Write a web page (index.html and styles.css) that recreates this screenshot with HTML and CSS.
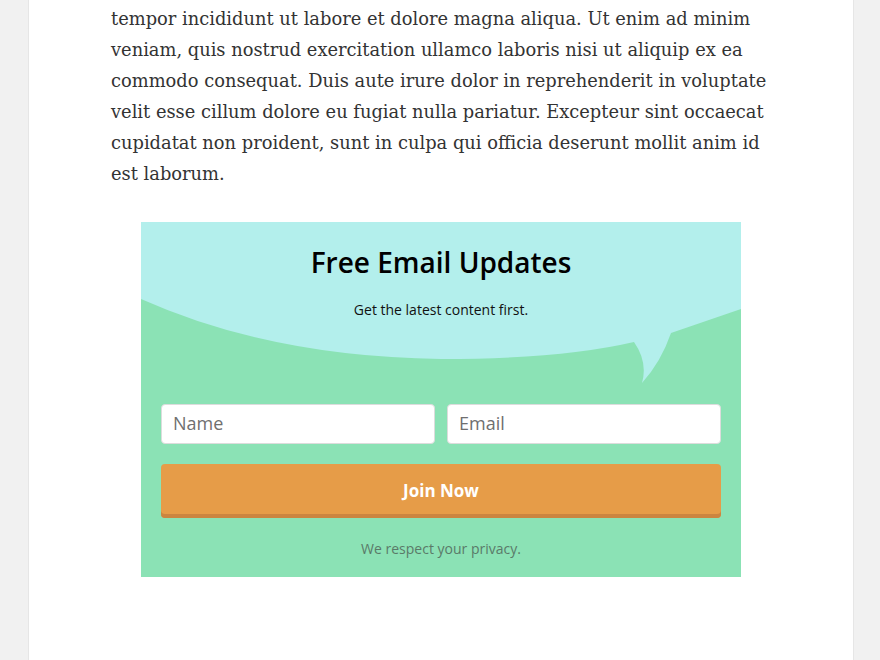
FILE: index.html
```html
<!DOCTYPE html>
<html>
<head>
<meta charset="utf-8">
<link rel="stylesheet" href="styles.css">
</head>
<body>
<div class="page">
  <article class="content">
    <p class="body-text">tempor incididunt ut labore et dolore magna aliqua. Ut enim ad minim veniam, quis nostrud exercitation ullamco laboris nisi ut aliquip ex ea commodo consequat. Duis aute irure dolor in reprehenderit in voluptate velit esse cillum dolore eu fugiat nulla pariatur. Excepteur sint occaecat cupidatat non proident, sunt in culpa qui officia deserunt mollit anim id est laborum.</p>

    <div class="optin">
      <svg class="bubble" width="600" height="170" viewBox="0 0 600 170" aria-hidden="true">
        <path d="M0,0 H600 V87 L530,111 Q520,140 501,161 Q507,140 493,120 Q420,137 300,137 Q130,135 0,77 Z" fill="#b3efec"/>
      </svg>
      <div class="optin-head">
        <h2 class="optin-title">Free Email Updates</h2>
        <p class="optin-sub">Get the latest content first.</p>
      </div>
      <form class="optin-form">
        <div class="fields">
          <input class="field" type="text" placeholder="Name">
          <input class="field" type="email" placeholder="Email">
        </div>
        <button class="join" type="button">Join Now</button>
        <p class="privacy">We respect your privacy.</p>
      </form>
    </div>
  </article>
</div>
</body>
</html>
```

FILE: styles.css
```css
html, body {
  margin: 0;
  padding: 0;
  background: #f1f1f1;
  height: 100%;
  overflow: hidden;
}

.page {
  width: 824px;
  margin-left: 29px;
  background: #ffffff;
  box-shadow: -1px 0 0 #e6e6e6, 1px 0 0 #e6e6e6;
  height: 660px;
}

.content {
  width: 660px;
  margin: 0 auto;
  padding-top: 3px;
}

.body-text {
  margin: 0;
  font-family: "DejaVu Serif", "Liberation Serif", serif;
  font-size: 17.85px;
  line-height: 31px;
  color: #333333;
}

.optin {
  position: relative;
  width: 600px;
  margin: 33px auto 0;
  background: #8be2b5;
  font-family: "Open Sans", sans-serif;
}

.bubble {
  position: absolute;
  left: 0;
  top: 0;
  display: block;
}

.optin-head {
  position: relative;
  text-align: center;
  padding-top: 20px;
  height: 162px;
  box-sizing: border-box;
}

.optin-title {
  margin: 0;
  font-size: 28px;
  font-weight: 600;
  line-height: 40px;
  color: #000000;
}

.optin-sub {
  margin: 18px 0 0;
  font-size: 14px;
  line-height: 20px;
  color: #111111;
}

.optin-form {
  position: relative;
  padding: 20px 20px 18px;
}

.fields {
  display: flex;
  gap: 12px;
}

.field {
  flex: 1;
  min-width: 0;
  height: 40px;
  box-sizing: border-box;
  border: 1px solid #dcdcdc;
  border-radius: 4px;
  background: #ffffff;
  padding: 0 11px 3px;
  font-family: "Open Sans", sans-serif;
  font-size: 18px;
  color: #555555;
  outline: none;
}

.field::placeholder {
  color: #6f6f6f;
}

.join {
  display: block;
  width: 100%;
  margin-top: 20px;
  height: 54px;
  border: none;
  border-radius: 4px;
  background: #e69c48;
  box-shadow: inset 0 -4px 0 #cb8540;
  color: #ffffff;
  font-family: "Open Sans", sans-serif;
  font-size: 17px;
  font-weight: 700;
  padding: 0 0 2px;
}

.privacy {
  margin: 21px 0 0;
  text-align: center;
  font-size: 14px;
  line-height: 20px;
  color: #5a7a69;
}
```
